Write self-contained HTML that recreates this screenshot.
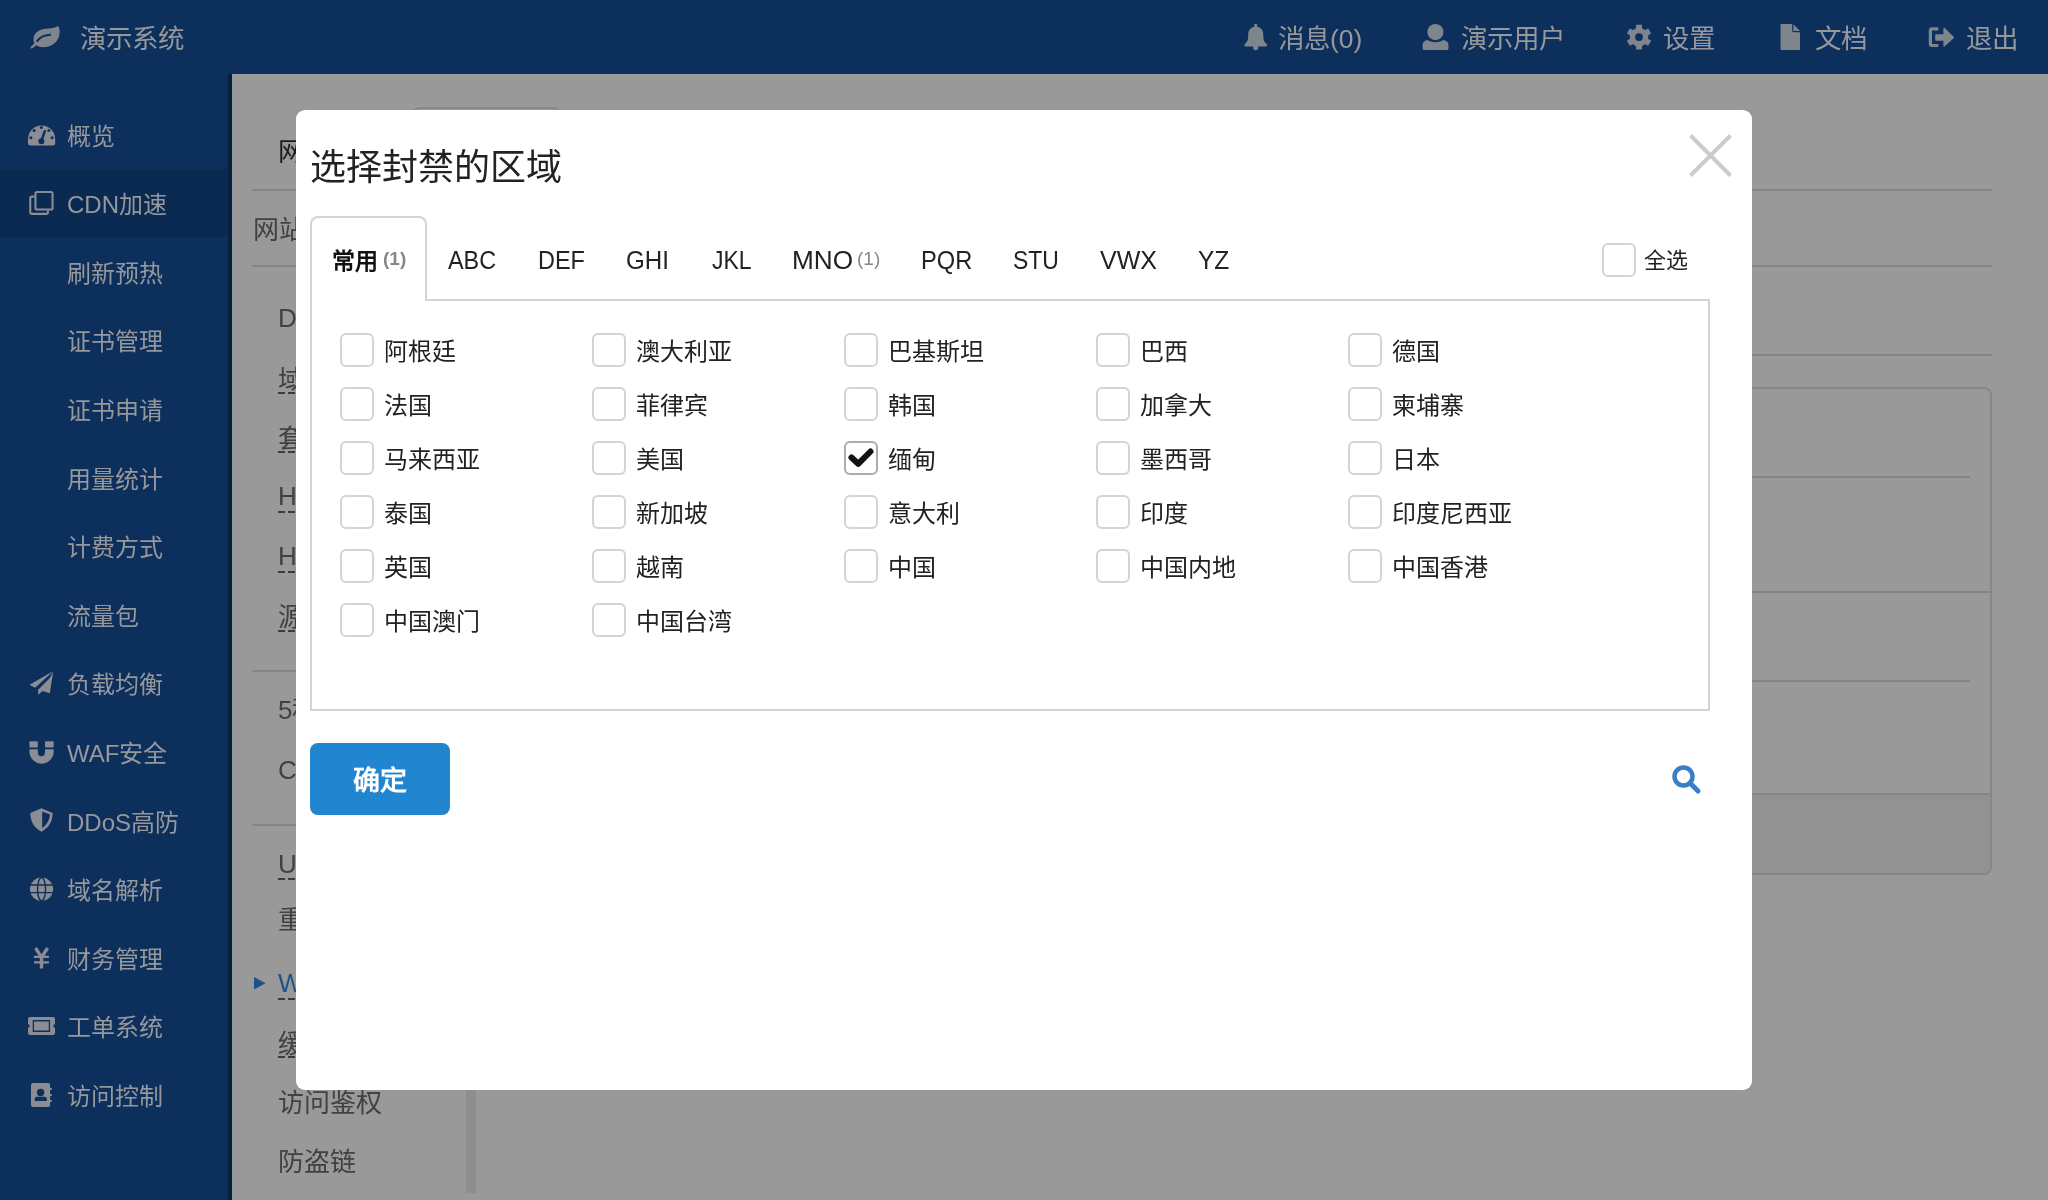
<!DOCTYPE html>
<html lang="zh-CN"><head><meta charset="utf-8">
<style>
*{box-sizing:border-box;margin:0;padding:0}
html,body{width:2048px;height:1200px;overflow:hidden}
body{position:relative;background:#999;font-family:"Liberation Sans",sans-serif;color:#222}
.a{position:absolute}
.t{position:absolute;white-space:nowrap;line-height:1;margin:1px 0 0 -1px}
.tab,.cnt{margin:0}
svg{position:absolute;overflow:visible}
#hdr{left:0;top:0;width:2048px;height:74px;background:#0d2f5c}
#side{left:0;top:74px;width:228px;height:1126px;background:#0d2f5c}
#strip{left:228px;top:74px;width:4px;height:1126px;background:#08203f}
.hd{font-size:26.5px;color:#96989c}
.sd{font-size:24px;color:#96989c}
.bg{font-size:26px;color:#414141}
.hl{position:absolute;height:2px;background:#848484}
.du{position:absolute;height:2px;background-image:linear-gradient(90deg,#3c3c3c 0,#3c3c3c 7px,transparent 7px,transparent 10px);background-size:10px 2px}
#modal{left:296px;top:110px;width:1456px;height:980px;background:#fff;border-radius:9px}
.cb{position:absolute;width:34px;height:34px;border:2px solid #d4d4d5;border-radius:6px;background:#fff}
.cb.ck{border-color:#aaabac}
.lb{font-size:24px;color:#222}
.tab{font-size:25px;color:#222}
.cnt{font-size:19px;color:#888;font-weight:bold}
</style></head><body><div id="root" style="position:absolute;left:0;top:0;width:2048px;height:1200px;will-change:transform">
<div id="hdr" class="a"></div>
<div id="side" class="a"></div>
<div id="strip" class="a"></div>
<div class="a" style="left:0;top:169px;width:228px;height:68px;background:#0a2a52"></div>
<svg class="a" style="left:0;top:0" width="2048" height="1200">
<g fill="#7f858d">
<!-- leaf -->
<path d="M33.5,40 C33,31 42,28.5 49,28.5 C53,28.5 55.5,27.5 57.5,26 C60,27.5 60.2,33 59,36.5 C57,43 50.5,47.2 43.5,47.2 C40.5,47.2 38,46.2 36.3,45.2 L32.2,48.4 C31.2,49.1 30,47.9 30.8,47 L34.4,43.2 C33.8,42.2 33.5,41.2 33.5,40Z"/>
<!-- bell -->
<path d="M1255.7,26.8 C1251,26.8 1248.2,30 1248.2,34.5 C1248.2,40 1247.5,42 1244.5,44.3 C1244.1,45.5 1244.6,46.6 1245.6,46.6 L1265.9,46.6 C1266.9,46.6 1267.4,45.5 1267,44.3 C1264,42 1263.3,40 1263.3,34.5 C1263.3,30 1260.4,26.8 1255.7,26.8Z"/>
<circle cx="1255.7" cy="25.5" r="1.7"/><circle cx="1255.7" cy="47.6" r="2.6"/>
<!-- user -->
<circle cx="1435.4" cy="32.1" r="8.1"/>
<path d="M1422.6,45 C1422.6,42 1425,40.3 1428,40.3 C1430,41.6 1432.5,42.3 1435.4,42.3 C1438.3,42.3 1440.8,41.6 1442.9,40.3 C1446,40.3 1448.5,42 1448.5,45 L1448.5,48.2 C1448.5,49.3 1447.6,50.1 1446.6,50.1 L1424.5,50.1 C1423.4,50.1 1422.6,49.3 1422.6,48.2Z"/>
<!-- gear -->
<g transform="translate(1639,37.1)">
<circle r="9.3"/>
<rect x="-3" y="-12.3" width="6" height="6" rx="0.6"/>
<rect x="-3" y="-12.3" width="6" height="6" rx="0.6" transform="rotate(60)"/>
<rect x="-3" y="-12.3" width="6" height="6" rx="0.6" transform="rotate(120)"/>
<rect x="-3" y="-12.3" width="6" height="6" rx="0.6" transform="rotate(180)"/>
<rect x="-3" y="-12.3" width="6" height="6" rx="0.6" transform="rotate(240)"/>
<rect x="-3" y="-12.3" width="6" height="6" rx="0.6" transform="rotate(300)"/>
</g>
<!-- file -->
<path d="M1780.5,25 Q1780.5,24 1781.5,24 L1792.2,24 L1792.2,30.8 Q1792.2,32.2 1793.6,32.2 L1800,32.2 L1800,49 Q1800,50 1799,50 L1781.5,50 Q1780.5,50 1780.5,49Z"/>
<path d="M1793.4,24.3 L1800,30.9 L1793.4,30.9Z"/>
<!-- sign out -->
<path d="M1938.3,27.3 L1932,27.3 Q1928.8,27.3 1928.8,30.5 L1928.8,43.8 Q1928.8,47 1932,47 L1938.3,47 L1938.3,43.9 L1932,43.9 L1932,30.4 L1938.3,30.4Z"/>
<path d="M1935.2,35.3 Q1935.2,34.35 1936.2,34.35 L1943.4,34.35 L1943.4,28.6 Q1943.6,27 1944.8,28.1 L1953.6,36.7 Q1954.4,37.5 1953.6,38.3 L1944.8,46.2 Q1943.6,47.3 1943.4,45.8 L1943.4,40.65 L1936.2,40.65 Q1935.2,40.65 1935.2,39.7Z"/>
</g><g fill="#8a8d93">
<!-- gauge -->
<path d="M28,139 A13.6,13.6 0 0 1 55.2,139 L55.2,143.3 Q55.2,145.6 53,145.6 L30.2,145.6 Q28,145.6 28,143.3Z"/>
<!-- copy -->
<path d="M37,191 L51,191 Q53.6,191 53.6,193.6 L53.6,207.9 Q53.6,210.5 51,210.5 L37,210.5 Q34.4,210.5 34.4,207.9 L34.4,193.6 Q34.4,191 37,191Z M36.5,193.1 L36.5,208.4 L51.5,208.4 L51.5,193.1Z" fill-rule="evenodd"/>
<path d="M34.4,195.6 L32,195.6 Q29.2,195.6 29.2,198.3 L29.2,212.2 Q29.2,214.9 32,214.9 L46.2,214.9 Q48.9,214.9 48.9,212.2 L48.9,210.5 L46.8,210.5 L46.8,212.8 L31.3,212.8 L31.3,197.7 L34.4,197.7Z"/>
<!-- plane -->
<path d="M53,671.2 L29.5,684.7 L35.1,687.7 L47.8,676.2Z"/>
<path d="M53.2,671.5 L49.8,693.3 L42.6,690.9 L38.4,694.8 L37.9,690 L49.6,678.2Z"/>
<!-- magnet -->
<rect x="29.4" y="741.2" width="8.4" height="6.2" rx="1"/>
<rect x="45" y="741.2" width="8.7" height="6.2" rx="1"/>
<path d="M29.4,749.2 L37.8,749.2 L37.8,752.6 A3.6,3.6 0 0 0 45,752.6 L45,749.2 L53.7,749.2 L53.7,751.5 A12.15,12.15 0 0 1 29.4,751.5Z"/>
<!-- shield -->
<path d="M41.4,808.2 L52.7,813.1 C52.7,822 48,828.5 41.4,831.7 C34.8,828.5 30.3,822 30.3,813.1Z M42.2,811.5 L42.2,828.2 C46.5,825 49.6,820.5 49.9,814.6Z" fill-rule="evenodd"/>
<!-- globe -->
<circle cx="41.55" cy="889.2" r="11.6"/>
<!-- yen -->
<g stroke="#8a8d93" fill="none">
<path d="M35.6,948 L41.5,957.3 L47.6,948" stroke-width="3.3" stroke-linejoin="miter"/>
<path d="M41.5,957 L41.5,968.5" stroke-width="3.4"/>
<path d="M34,956.8 L48.9,956.8 M34,962.3 L48.9,962.3" stroke-width="2.3"/>
</g>
<!-- ticket -->
<path d="M30,1017 L53,1017 Q55,1017 55,1019 L55,1024.2 A1.8,1.8 0 0 0 55,1027.8 L55,1033 Q55,1035 53,1035 L30,1035 Q28,1035 28,1033 L28,1027.8 A1.8,1.8 0 0 0 28,1024.2 L28,1019 Q28,1017 30,1017Z"/>
<!-- address book -->
<path d="M33,1083 L48.1,1083 Q50.1,1083 50.1,1085 L50.1,1104.9 Q50.1,1106.9 48.1,1106.9 L33,1106.9 Q31,1106.9 31,1104.9 L31,1085 Q31,1083 33,1083Z"/>
<rect x="49" y="1088.1" width="3" height="1.9" rx="0.9"/><rect x="49" y="1094.1" width="3" height="1.9" rx="0.9"/><rect x="49" y="1100.1" width="3" height="1.9" rx="0.9"/>
</g>
<g fill="#0d2f5c" stroke="none">
<path d="M36.7,41.6 C40,37 44,34.8 51,34.8" stroke="#0d2f5c" stroke-width="1.9" fill="none"/>
<circle cx="1639" cy="37.1" r="3.9"/>
<circle cx="41.4" cy="127.6" r="1.5"/><circle cx="34.1" cy="130.5" r="1.5"/><circle cx="48.8" cy="130.5" r="1.5"/><circle cx="30.9" cy="137.8" r="1.5"/><circle cx="52.1" cy="137.8" r="1.5"/>
<circle cx="41.4" cy="141.2" r="3"/>
<path d="M41.4,141 L44.8,131.2" stroke="#0d2f5c" stroke-width="2.4" stroke-linecap="round"/>
<path d="M29.8,885 L53.3,885 M29.8,892.6 L53.3,892.6" stroke="#0d2f5c" stroke-width="1.4"/>
<ellipse cx="41.55" cy="889.2" rx="4" ry="11.6" fill="none" stroke="#0d2f5c" stroke-width="1.4"/>
<path d="M32.7,1020 L50.1,1020 L50.1,1031.9 L32.7,1031.9Z M34,1021.4 L34,1030.5 L48.8,1030.5 L48.8,1021.4Z" fill-rule="evenodd"/>
<circle cx="40.6" cy="1092.5" r="3.7"/>
<path d="M34.8,1100.9 L34.8,1098.8 Q34.8,1096.8 37,1096.8 L44.6,1096.8 Q46.8,1096.8 46.8,1098.8 L46.8,1100.9Z"/>
</g>
</svg>
<div class="t hd" style="left:80.5px;top:25px">演示系统</div>
<div class="t hd" style="left:1279px;top:25px">消息(0)</div>
<div class="t hd" style="left:1461.5px;top:25px">演示用户</div>
<div class="t hd" style="left:1664px;top:25px">设置</div>
<div class="t hd" style="left:1816px;top:25px">文档</div>
<div class="t hd" style="left:1967px;top:25px">退出</div>
<div class="t sd" style="left:68px;top:123.5px">概览</div>
<div class="t sd" style="left:68px;top:192.1px">CDN加速</div>
<div class="t sd" style="left:68px;top:260.7px">刷新预热</div>
<div class="t sd" style="left:68px;top:329.3px">证书管理</div>
<div class="t sd" style="left:68px;top:397.9px">证书申请</div>
<div class="t sd" style="left:68px;top:466.5px">用量统计</div>
<div class="t sd" style="left:68px;top:535.1px">计费方式</div>
<div class="t sd" style="left:68px;top:603.7px">流量包</div>
<div class="t sd" style="left:68px;top:672.3px">负载均衡</div>
<div class="t sd" style="left:68px;top:740.9px">WAF安全</div>
<div class="t sd" style="left:68px;top:809.5px">DDoS高防</div>
<div class="t sd" style="left:68px;top:878.1px">域名解析</div>
<div class="t sd" style="left:68px;top:946.7px">财务管理</div>
<div class="t sd" style="left:68px;top:1015.3px">工单系统</div>
<div class="t sd" style="left:68px;top:1083.9px">访问控制</div>

<div class="a" style="left:412px;top:107px;width:149px;height:40px;border:2px solid #888;border-bottom:none;border-radius:8px 8px 0 0"></div>
<div class="t bg" style="left:279px;top:138px;color:#1c1c1c">网站</div>
<div class="hl" style="left:252px;top:189px;width:1740px"></div>
<div class="t bg" style="left:254px;top:216px">网站</div>
<div class="hl" style="left:252px;top:265px;width:1740px"></div>
<div class="hl" style="left:310px;top:354px;width:1682px"></div>
<div class="t bg" style="left:279px;top:304px">DNS</div>
<div class="t bg" style="left:279px;top:366px">域名</div><div class="du" style="left:278px;top:392px;width:60px"></div>
<div class="t bg" style="left:279px;top:425px">套餐</div><div class="du" style="left:278px;top:451px;width:60px"></div>
<div class="t bg" style="left:279px;top:482px">HTTP</div><div class="du" style="left:278px;top:511px;width:60px"></div>
<div class="t bg" style="left:279px;top:542px">HTTPS</div><div class="du" style="left:278px;top:571px;width:60px"></div>
<div class="t bg" style="left:279px;top:603px">源站</div><div class="du" style="left:278px;top:630px;width:60px"></div>
<div class="hl" style="left:252px;top:670px;width:214px"></div>
<div class="t bg" style="left:279px;top:696px">5秒</div>
<div class="t bg" style="left:279px;top:756px">CC</div>
<div class="hl" style="left:252px;top:824px;width:214px"></div>
<div class="t bg" style="left:279px;top:850px">URL</div><div class="du" style="left:278px;top:878px;width:60px"></div>
<div class="t bg" style="left:279px;top:906px">重定向</div>
<svg style="left:254px;top:977px" width="12" height="13"><path d="M0 0 L11.5 6.25 L0 12.5Z" fill="#1a5488"/></svg>
<div class="t bg" style="left:279px;top:969px;color:#1a5488">WAF</div><div class="du" style="left:278px;top:998px;width:60px"></div>
<div class="t bg" style="left:279px;top:1030px">缓存</div><div class="du" style="left:278px;top:1056px;width:60px"></div>
<div class="t bg" style="left:279px;top:1089px">访问鉴权</div>
<div class="t bg" style="left:279px;top:1148px">防盗链</div>
<div class="a" style="left:466px;top:1080px;width:10px;height:113px;background:#8e8e8e"></div>
<div class="a" style="left:490px;top:387px;width:1502px;height:488px;border:2px solid #878787;border-radius:8px;overflow:hidden">
  <div class="a" style="left:0;top:404px;width:1500px;height:82px;background:#929292;border-top:2px solid #858585"></div>
  <div class="a" style="left:0;top:202px;width:1500px;height:2px;background:#858585"></div>
</div>
<div class="hl" style="left:500px;top:476px;width:1470px"></div>
<div class="hl" style="left:500px;top:680px;width:1470px"></div>

<div id="modal" class="a"></div>
<div class="t" style="left:311px;top:149px;font-size:36px;color:#222">选择封禁的区域</div>
<svg style="left:1689px;top:134px" width="43" height="43"><path d="M1.5 1.5 L41.5 41.5 M41.5 1.5 L1.5 41.5" stroke="#cccccc" stroke-width="4"/></svg>

<div class="a" style="left:310px;top:299px;width:1400px;height:412px;border:2px solid #d4d4d5"></div>
<div class="a" style="left:310px;top:216px;width:117px;height:85px;border:2px solid #d4d4d5;border-bottom:none;border-radius:8px 8px 0 0;background:#fff"></div>
<div class="t" style="left:333px;top:249px;font-size:23px;font-weight:bold;color:#111">常用</div>
<div class="t cnt" style="left:383px;top:249px">(1)</div>
<div class="t tab" style="left:448px;top:248px;transform:scaleX(0.937);transform-origin:0 0">ABC</div>
<div class="t tab" style="left:537.7px;top:248px;transform:scaleX(0.938);transform-origin:0 0">DEF</div>
<div class="t tab" style="left:626.3px;top:248px;transform:scaleX(0.966);transform-origin:0 0">GHI</div>
<div class="t tab" style="left:712.3px;top:248px;transform:scaleX(0.918);transform-origin:0 0">JKL</div>
<div class="t tab" style="left:792.2px;top:248px;transform:scaleX(1.047);transform-origin:0 0">MNO</div>
<div class="t cnt" style="left:857px;top:249px;font-weight:normal">(1)</div>
<div class="t tab" style="left:921.4px;top:248px;transform:scaleX(0.945);transform-origin:0 0">PQR</div>
<div class="t tab" style="left:1013.1px;top:248px;transform:scaleX(0.916);transform-origin:0 0">STU</div>
<div class="t tab" style="left:1100px;top:248px">VWX</div>
<div class="t tab" style="left:1198px;top:248px;transform:scaleX(0.981);transform-origin:0 0">YZ</div>
<div class="cb" style="left:1602px;top:243px"></div>
<div class="t lb" style="left:1644.5px;top:249px;font-size:22px">全选</div>

<div class="cb" style="left:340px;top:333px"></div><div class="t lb" style="left:385px;top:339px">阿根廷</div>
<div class="cb" style="left:592px;top:333px"></div><div class="t lb" style="left:637px;top:339px">澳大利亚</div>
<div class="cb" style="left:844px;top:333px"></div><div class="t lb" style="left:889px;top:339px">巴基斯坦</div>
<div class="cb" style="left:1096px;top:333px"></div><div class="t lb" style="left:1141px;top:339px">巴西</div>
<div class="cb" style="left:1348px;top:333px"></div><div class="t lb" style="left:1393px;top:339px">德国</div>
<div class="cb" style="left:340px;top:387px"></div><div class="t lb" style="left:385px;top:393px">法国</div>
<div class="cb" style="left:592px;top:387px"></div><div class="t lb" style="left:637px;top:393px">菲律宾</div>
<div class="cb" style="left:844px;top:387px"></div><div class="t lb" style="left:889px;top:393px">韩国</div>
<div class="cb" style="left:1096px;top:387px"></div><div class="t lb" style="left:1141px;top:393px">加拿大</div>
<div class="cb" style="left:1348px;top:387px"></div><div class="t lb" style="left:1393px;top:393px">柬埔寨</div>
<div class="cb" style="left:340px;top:441px"></div><div class="t lb" style="left:385px;top:447px">马来西亚</div>
<div class="cb" style="left:592px;top:441px"></div><div class="t lb" style="left:637px;top:447px">美国</div>
<div class="cb ck" style="left:844px;top:441px"></div><div class="t lb" style="left:889px;top:447px">缅甸</div>
<div class="cb" style="left:1096px;top:441px"></div><div class="t lb" style="left:1141px;top:447px">墨西哥</div>
<div class="cb" style="left:1348px;top:441px"></div><div class="t lb" style="left:1393px;top:447px">日本</div>
<div class="cb" style="left:340px;top:495px"></div><div class="t lb" style="left:385px;top:501px">泰国</div>
<div class="cb" style="left:592px;top:495px"></div><div class="t lb" style="left:637px;top:501px">新加坡</div>
<div class="cb" style="left:844px;top:495px"></div><div class="t lb" style="left:889px;top:501px">意大利</div>
<div class="cb" style="left:1096px;top:495px"></div><div class="t lb" style="left:1141px;top:501px">印度</div>
<div class="cb" style="left:1348px;top:495px"></div><div class="t lb" style="left:1393px;top:501px">印度尼西亚</div>
<div class="cb" style="left:340px;top:549px"></div><div class="t lb" style="left:385px;top:555px">英国</div>
<div class="cb" style="left:592px;top:549px"></div><div class="t lb" style="left:637px;top:555px">越南</div>
<div class="cb" style="left:844px;top:549px"></div><div class="t lb" style="left:889px;top:555px">中国</div>
<div class="cb" style="left:1096px;top:549px"></div><div class="t lb" style="left:1141px;top:555px">中国内地</div>
<div class="cb" style="left:1348px;top:549px"></div><div class="t lb" style="left:1393px;top:555px">中国香港</div>
<div class="cb" style="left:340px;top:603px"></div><div class="t lb" style="left:385px;top:609px">中国澳门</div>
<div class="cb" style="left:592px;top:603px"></div><div class="t lb" style="left:637px;top:609px">中国台湾</div>
<svg style="left:844px;top:441px" width="34" height="34"><path d="M7.5 16.5 L14.2 22.8 L26.5 10.5" fill="none" stroke="#111" stroke-width="6" stroke-linecap="round" stroke-linejoin="round"/></svg>

<div class="a" style="left:310px;top:743px;width:140px;height:72px;background:#2185d0;border-radius:8px"></div>
<div class="t" style="left:354px;top:767px;font-size:27px;font-weight:bold;color:#fff">确定</div>
<svg style="left:1672px;top:765px" width="29" height="29"><circle cx="11.5" cy="11.5" r="9" fill="none" stroke="#3a7fc5" stroke-width="4.5"/><path d="M18.5 18.5 L26 26" stroke="#3a7fc5" stroke-width="5" stroke-linecap="round"/></svg>
</div></body></html>
